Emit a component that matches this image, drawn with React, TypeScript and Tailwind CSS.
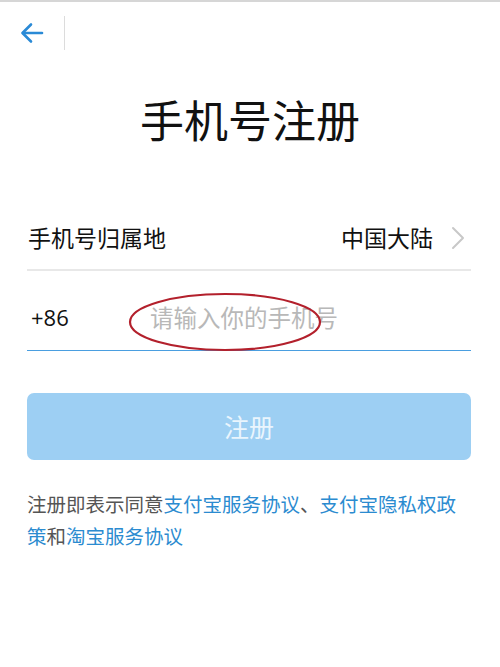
import React from "react";

const font = { fontFamily: '"Noto Sans CJK SC", "Noto Sans", sans-serif' };

export default function App() {
  return (
    <div className="w-[500px] h-[667px] bg-white border-t-2 border-[#d6d6d6] overflow-hidden" style={font}>
      {/* Header */}
      <div className="flex items-center h-[64px]">
        <button className="w-[64px] h-[64px] flex items-center justify-center text-[#2a8ad6] -mt-[3px]">
          <svg width="24" height="22" viewBox="0 0 24 22" fill="none" stroke="currentColor" strokeWidth="2.6" strokeLinecap="round" strokeLinejoin="round">
            <path d="M22 11H3" />
            <path d="M11 2.5L2.5 11L11 19.5" />
          </svg>
        </button>
        <div className="w-px h-[34px] bg-[#dcdcdc] -mt-[3px]" />
      </div>

      {/* Title */}
      <h1 className="text-center text-[44px] leading-[60px] text-[#111] mt-[23px]">手机号注册</h1>

      {/* Form */}
      <div className="pl-[27px] pr-[29px] mt-[54px]">
        <div className="flex items-center justify-between h-[68px] pt-[3px] border-b-2 border-[#e8e8e8]">
          <span className="text-[23px] text-[#111] pl-[1px]">手机号归属地</span>
          <div className="flex items-center gap-[18px]">
            <span className="text-[23px] text-[#111]">中国大陆</span>
            <svg width="14" height="24" viewBox="0 0 14 24" fill="none" stroke="#c8c8c8" strokeWidth="2" strokeLinecap="round" strokeLinejoin="round" className="mr-[6px]">
              <path d="M2 2l10 10L2 22" />
            </svg>
          </div>
        </div>

        <div className="relative flex items-center h-[80px] pt-[14px] border-b-[1.5px] border-[#4a9ee0]">
          <span className="text-[22px] text-[#111] w-[123px] pl-[4px]" style={{ fontFamily: '"Open Sans", "Noto Sans", sans-serif' }}>+86</span>
          <span className="text-[23.5px] text-[#b8b8b8]">请输入你的手机号</span>
          {/* annotation ellipse */}
          <svg className="absolute left-[100px] top-[20px]" width="198" height="62" viewBox="0 0 198 62" fill="none">
            <ellipse cx="98" cy="31" rx="95" ry="28" stroke="#b3202c" strokeWidth="2.2" />
          </svg>
        </div>

        <button className="w-full h-[67px] mt-[42px] rounded-[7px] bg-[#9dcff3] text-[25px] text-[#eaf5fd]">注册</button>

        <p className="mt-[28px] text-[19.5px] leading-[32px] text-[#555]">
          注册即表示同意<span className="text-[#2b8bd0]">支付宝服务协议</span>、<span className="text-[#2b8bd0]">支付宝隐私权政策</span>和<span className="text-[#2b8bd0]">淘宝服务协议</span>
        </p>
      </div>
    </div>
  );
}
